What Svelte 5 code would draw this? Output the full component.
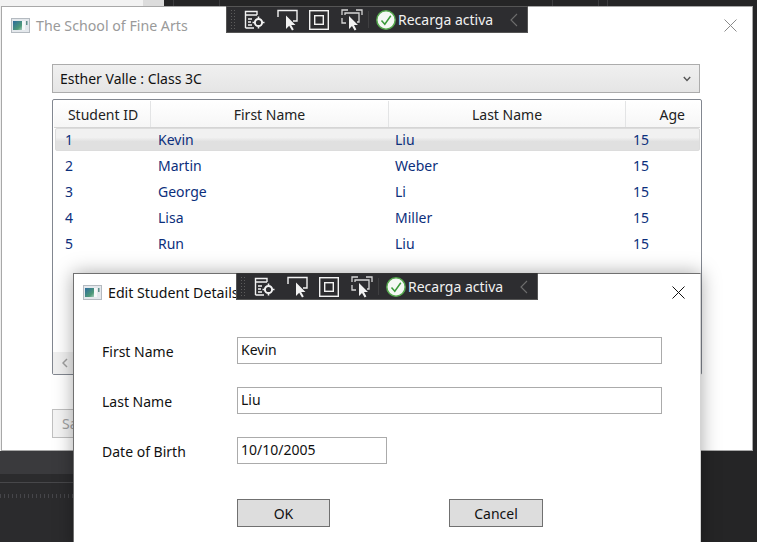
<script>
	const columns = [
		{ title: 'Student ID', width: 97, cls: 'center first' },
		{ title: 'First Name', width: 238, cls: 'center' },
		{ title: 'Last Name', width: 237, cls: 'center' },
		{ title: 'Age', width: 71, cls: 'right' }
	];
	// cell text sits a bit left of the header separators
	const cellWidths = [93, 237, 238];
	const students = [
		{ id: 1, first: 'Kevin', last: 'Liu', age: 15 },
		{ id: 2, first: 'Martin', last: 'Weber', age: 15 },
		{ id: 3, first: 'George', last: 'Li', age: 15 },
		{ id: 4, first: 'Lisa', last: 'Miller', age: 15 },
		{ id: 5, first: 'Run', last: 'Liu', age: 15 }
	];
</script>

{#snippet appIcon(id)}
	<svg class="app-icon" width="19" height="15" viewBox="0 0 19 15">
		<defs>
			<linearGradient id={id} x1="0" y1="0" x2="1" y2="1">
				<stop offset="0" stop-color="#2c6a9c" />
				<stop offset="0.7" stop-color="#4e9a78" />
				<stop offset="1" stop-color="#a9cdbf" />
			</linearGradient>
		</defs>
		<rect x="0.5" y="0.5" width="18" height="14" fill="#e4e8ec" stroke="#b4bac0" />
		<rect x="2" y="3" width="9" height="9" fill="url(#{id})" />
		<rect x="11" y="3" width="3" height="9" fill="#f6f8f8" />
		<rect x="15" y="3" width="1.5" height="4" fill="#5f8f8a" />
	</svg>
{/snippet}

{#snippet toolbar(cls)}
	<div class="toolbar {cls}">
		<div class="grip"></div>
		<svg class="tool t1" width="22" height="22" viewBox="0 0 22 22" fill="none" stroke="#f2f2f2" stroke-width="1.4">
			<path d="M1.5 19V2.5H13V6M1.5 6H13M4 10H8M4 13H7M4 16H8M1.5 19H10" />
			<circle cx="14.5" cy="13.5" r="3.6" stroke-width="2" />
			<path d="M14.5 7.5v2M14.5 17.5v2M8.5 13.5h2M18.5 13.5h2" stroke-width="1.6" />
		</svg>
		<svg class="tool t2" width="22" height="22" viewBox="0 0 22 22" fill="none" stroke="#f2f2f2" stroke-width="1.4">
			<path d="M1 8V1.5H20V12H16" />
			<path d="M9 6.5V20L12.2 16.8L15 21.5L16.8 20.5L14.2 16H18.5Z" fill="#f2f2f2" stroke="none" />
		</svg>
		<svg class="tool t3" width="20" height="20" viewBox="0 0 20 20" fill="none" stroke="#f2f2f2" stroke-width="1.4">
			<rect x="0.7" y="0.7" width="18.6" height="18.6" />
			<rect x="5.7" y="5.7" width="8.6" height="8.6" />
		</svg>
		<svg class="tool t4" width="22" height="22" viewBox="0 0 22 22" fill="none" stroke="#d6d6d6" stroke-width="1.3">
			<path d="M1 6V1H7M15 1H21V6M1 9V14H5M4 6V4H18V13H16" />
			<path d="M8 7V20L11 17L13.6 21.5L15.4 20.5L13 16H17Z" fill="#f2f2f2" stroke="none" />
		</svg>
		<div class="sep"></div>
		<svg class="check" width="20" height="20" viewBox="0 0 20 20">
			<circle cx="10" cy="10" r="9.2" fill="#f4f8f4" stroke="#55a84e" stroke-width="1.5" />
			<path d="M5.5 10.5L8.8 14.2L14.8 5.8" fill="none" stroke="#3a9a3a" stroke-width="1.5" />
		</svg>
		<span class="reload">Recarga activa</span>
		<svg class="chev" width="8" height="14" viewBox="0 0 8 14" fill="none" stroke="#6e6e6e" stroke-width="1.1">
			<path d="M7 1L1 7L7 13" />
		</svg>
	</div>
{/snippet}

<div class="desktop">
	<div class="back-top">
		<span class="bt-light"></span>
		<span class="bt-dark"></span>
		<i class="tick a"></i>
		<i class="tick b"></i>
		<i class="tick c"></i>
		<i class="tick d"></i>
		<i class="tick e"></i>
	</div>
	<div class="back-left"></div>
	<div class="back-bottom">
		<div class="bb-band"></div>
		<div class="bb-line"></div>
		<div class="bb-dots"></div>
	</div>

	<section class="window main">
		<header class="titlebar">
			{@render appIcon('ico-main')}
			<span class="title inactive">The School of Fine Arts</span>
			<svg class="close" width="13" height="13" viewBox="0 0 13 13" stroke="#8a8a8a" stroke-width="1">
				<path d="M0.5 0.5L12.5 12.5M12.5 0.5L0.5 12.5" />
			</svg>
		</header>

		<div class="body">
			<div class="combo">
				<span>Esther Valle : Class 3C</span>
				<svg width="8" height="6" viewBox="0 0 8 6" fill="none" stroke="#555" stroke-width="1.4">
					<path d="M0.8 1L4 4.4L7.2 1" />
				</svg>
			</div>

			<div class="grid">
				<div class="head">
					{#each columns as col}
						<div class="hcell {col.cls}" style="width: {col.width}px">{col.title}</div>
					{/each}
				</div>
				{#each students as s, i}
					<div class="row" class:selected={i === 0}>
						<span style="width: {cellWidths[0]}px">{s.id}</span>
						<span style="width: {cellWidths[1]}px">{s.first}</span>
						<span style="width: {cellWidths[2]}px">{s.last}</span>
						<span>{s.age}</span>
					</div>
				{/each}
				<div class="hscroll">
					<svg width="6" height="10" viewBox="0 0 6 10" fill="none" stroke="#a0a0a0" stroke-width="1.5">
						<path d="M5 1L1 5L5 9" />
					</svg>
				</div>
			</div>

			<div class="save">Save</div>
		</div>
	</section>

	{@render toolbar('tb-main')}

	<section class="window dialog">
		<header class="titlebar">
			{@render appIcon('ico-dialog')}
			<span class="title">Edit Student Details</span>
			<svg class="close" width="13" height="13" viewBox="0 0 13 13" stroke="#111" stroke-width="1">
				<path d="M0.5 0.5L12.5 12.5M12.5 0.5L0.5 12.5" />
			</svg>
		</header>

		<div class="form">
			<label for="first">First Name</label>
			<input id="first" value="Kevin" />
			<label for="last">Last Name</label>
			<input id="last" value="Liu" />
			<label for="dob">Date of Birth</label>
			<input id="dob" class="short" value="10/10/2005" />
		</div>

		<div class="actions">
			<button class="ok">OK</button>
			<button>Cancel</button>
		</div>
	</section>

	{@render toolbar('tb-dialog')}
</div>

<style>
	:global(body) {
		margin: 0;
		background: #252526;
	}

	.desktop {
		position: relative;
		width: 757px;
		height: 542px;
		overflow: hidden;
		background: #252526;
		font-family: "Noto Sans", "Open Sans", sans-serif;
		font-size: 14px;
		color: #111;
	}

	.back-top {
		position: absolute;
		left: 0;
		top: 0;
		width: 757px;
		height: 6px;
		display: flex;
		background: #252526;
	}

	.bt-light {
		width: 164px;
		background: linear-gradient(90deg, #f2f2f2 0 87%, #dcdcdc 87% 100%);
	}

	.bt-dark {
		flex: 1;
	}

	.tick {
		position: absolute;
		top: 0;
		width: 1px;
		height: 6px;
		background: #3c3c3e;
	}

	.tick.a {
		left: 173px;
	}

	.tick.b {
		left: 219px;
	}

	.tick.c {
		left: 552px;
	}

	.tick.d {
		left: 598px;
	}

	.tick.e {
		left: 607px;
	}

	.back-left {
		position: absolute;
		left: 0;
		top: 6px;
		width: 1px;
		height: 445px;
		background: #efefef;
	}

	.back-bottom {
		position: absolute;
		left: 0;
		top: 451px;
		width: 74px;
		height: 91px;
		background: #2b2b2d;
	}

	.bb-band {
		height: 23px;
		background: #3a3a3d;
	}

	.bb-line {
		margin-top: 8px;
		height: 1px;
		background: #47474a;
	}

	.bb-dots {
		margin-top: 11px;
		height: 4px;
		background: repeating-linear-gradient(90deg, #46464a 0 1px, transparent 1px 4px);
	}

	.window {
		position: absolute;
		box-sizing: border-box;
		background: #fff;
	}

	.main {
		left: 1px;
		top: 6px;
		width: 752px;
		height: 445px;
		border: 1px solid #a8a8a8;
	}

	.dialog {
		left: 73px;
		top: 273px;
		width: 628px;
		height: 280px;
		border: 1px solid #707070;
		border-right-color: #d4d4d4;
		border-bottom: none;
		box-shadow: 0 0 18px rgba(0, 0, 0, 0.34);
	}

	.titlebar {
		display: flex;
		align-items: center;
		height: 36px;
		padding-left: 9px;
		padding-right: 15px;
		gap: 6px;
		white-space: nowrap;
	}

	.title {
		flex: 1;
		font-size: 14.2px;
	}

	.title.inactive {
		color: #9a9a9a;
	}

	.body {
		padding: 21px 0 0 50px;
	}

	.combo {
		box-sizing: border-box;
		display: flex;
		align-items: center;
		justify-content: space-between;
		width: 648px;
		height: 29px;
		padding: 0 8px 0 7px;
		border: 1px solid #acacac;
		background: linear-gradient(#f0f0f0, #e5e5e5);
	}

	.grid {
		position: relative;
		box-sizing: border-box;
		width: 650px;
		height: 276px;
		margin-top: 6px;
		border: 1px solid #828790;
		border-radius: 2px;
		padding: 1px;
	}

	.head {
		display: flex;
		height: 26px;
		border-bottom: 1px solid #d5d5d5;
		background: linear-gradient(#fff, #f6f6f6);
	}

	.hcell {
		box-sizing: border-box;
		line-height: 27px;
		border-right: 1px solid #e3e4e5;
		color: #222;
	}

	.hcell:last-child {
		border-right: none;
	}

	.center {
		text-align: center;
	}

	.first {
		padding-left: 2px;
	}

	.right {
		text-align: right;
		padding-right: 12px;
	}

	.row {
		display: flex;
		height: 26px;
		line-height: 26px;
		padding-left: 11px;
		color: #0c2f7c;
	}

	.row span {
		flex: none;
	}

	.row.selected {
		box-sizing: border-box;
		height: 23px;
		line-height: 22px;
		width: 645px;
		margin: 0 0 2px 1px;
		padding-left: 9px;
		border: 1px solid #dcdcdc;
		border-radius: 2px;
		background: linear-gradient(#f1f1f1 0 40%, #e0e0e0 60% 100%);
	}

	.hscroll {
		position: absolute;
		left: 0;
		right: 0;
		bottom: 0;
		height: 22px;
		display: flex;
		align-items: center;
		padding-left: 9px;
		background: #f0f0f0;
	}

	.save {
		box-sizing: border-box;
		width: 90px;
		height: 29px;
		margin-top: 34px;
		padding-left: 9px;
		line-height: 27px;
		border: 1px solid #c0c0c0;
		color: #a0a0a0;
		background: #f4f4f4;
	}

	.form {
		display: grid;
		grid-template-columns: 135px 425px;
		grid-auto-rows: 27px;
		row-gap: 23px;
		align-items: center;
		padding: 27px 0 0 28px;
	}

	label {
		padding-top: 2px;
	}

	input {
		box-sizing: border-box;
		width: 100%;
		height: 27px;
		padding: 0 2px 2px 3px;
		border: 1px solid #ababab;
		outline: none;
		font: inherit;
		color: #111;
	}

	input.short {
		width: 150px;
	}

	.actions {
		display: flex;
		gap: 119px;
		padding: 35px 0 0 163px;
	}

	button {
		box-sizing: border-box;
		height: 28px;
		width: 94px;
		border: 1px solid #707070;
		background: #dddddd;
		font: inherit;
		color: #111;
	}

	button.ok {
		width: 93px;
	}

	.toolbar {
		position: absolute;
		box-sizing: border-box;
		display: flex;
		align-items: center;
		width: 302px;
		height: 27px;
		background: #2d2d30;
		border: 1px solid #555;
		color: #f1f1f1;
	}

	.tb-main {
		left: 226px;
		top: 6px;
	}

	.tb-dialog {
		left: 236px;
		top: 273px;
		border-top-color: #333;
	}

	.grip {
		width: 6px;
		height: 21px;
		margin-left: 3px;
		background-image: radial-gradient(#5c5c5c 0.8px, transparent 1px);
		background-size: 3px 3px;
	}

	.tool {
		flex: none;
	}

	.t1 {
		margin-left: 8px;
	}

	.t2 {
		margin-left: 11px;
	}

	.t3 {
		margin-left: 10px;
	}

	.t4 {
		margin-left: 12px;
	}

	.sep {
		width: 1px;
		height: 17px;
		margin-left: 5px;
		background: #3f3f41;
	}

	.check {
		flex: none;
		margin-left: 7px;
	}

	.reload {
		margin-left: 2px;
		font-size: 14px;
		white-space: nowrap;
	}

	.chev {
		flex: none;
		margin-left: 17px;
	}
</style>
